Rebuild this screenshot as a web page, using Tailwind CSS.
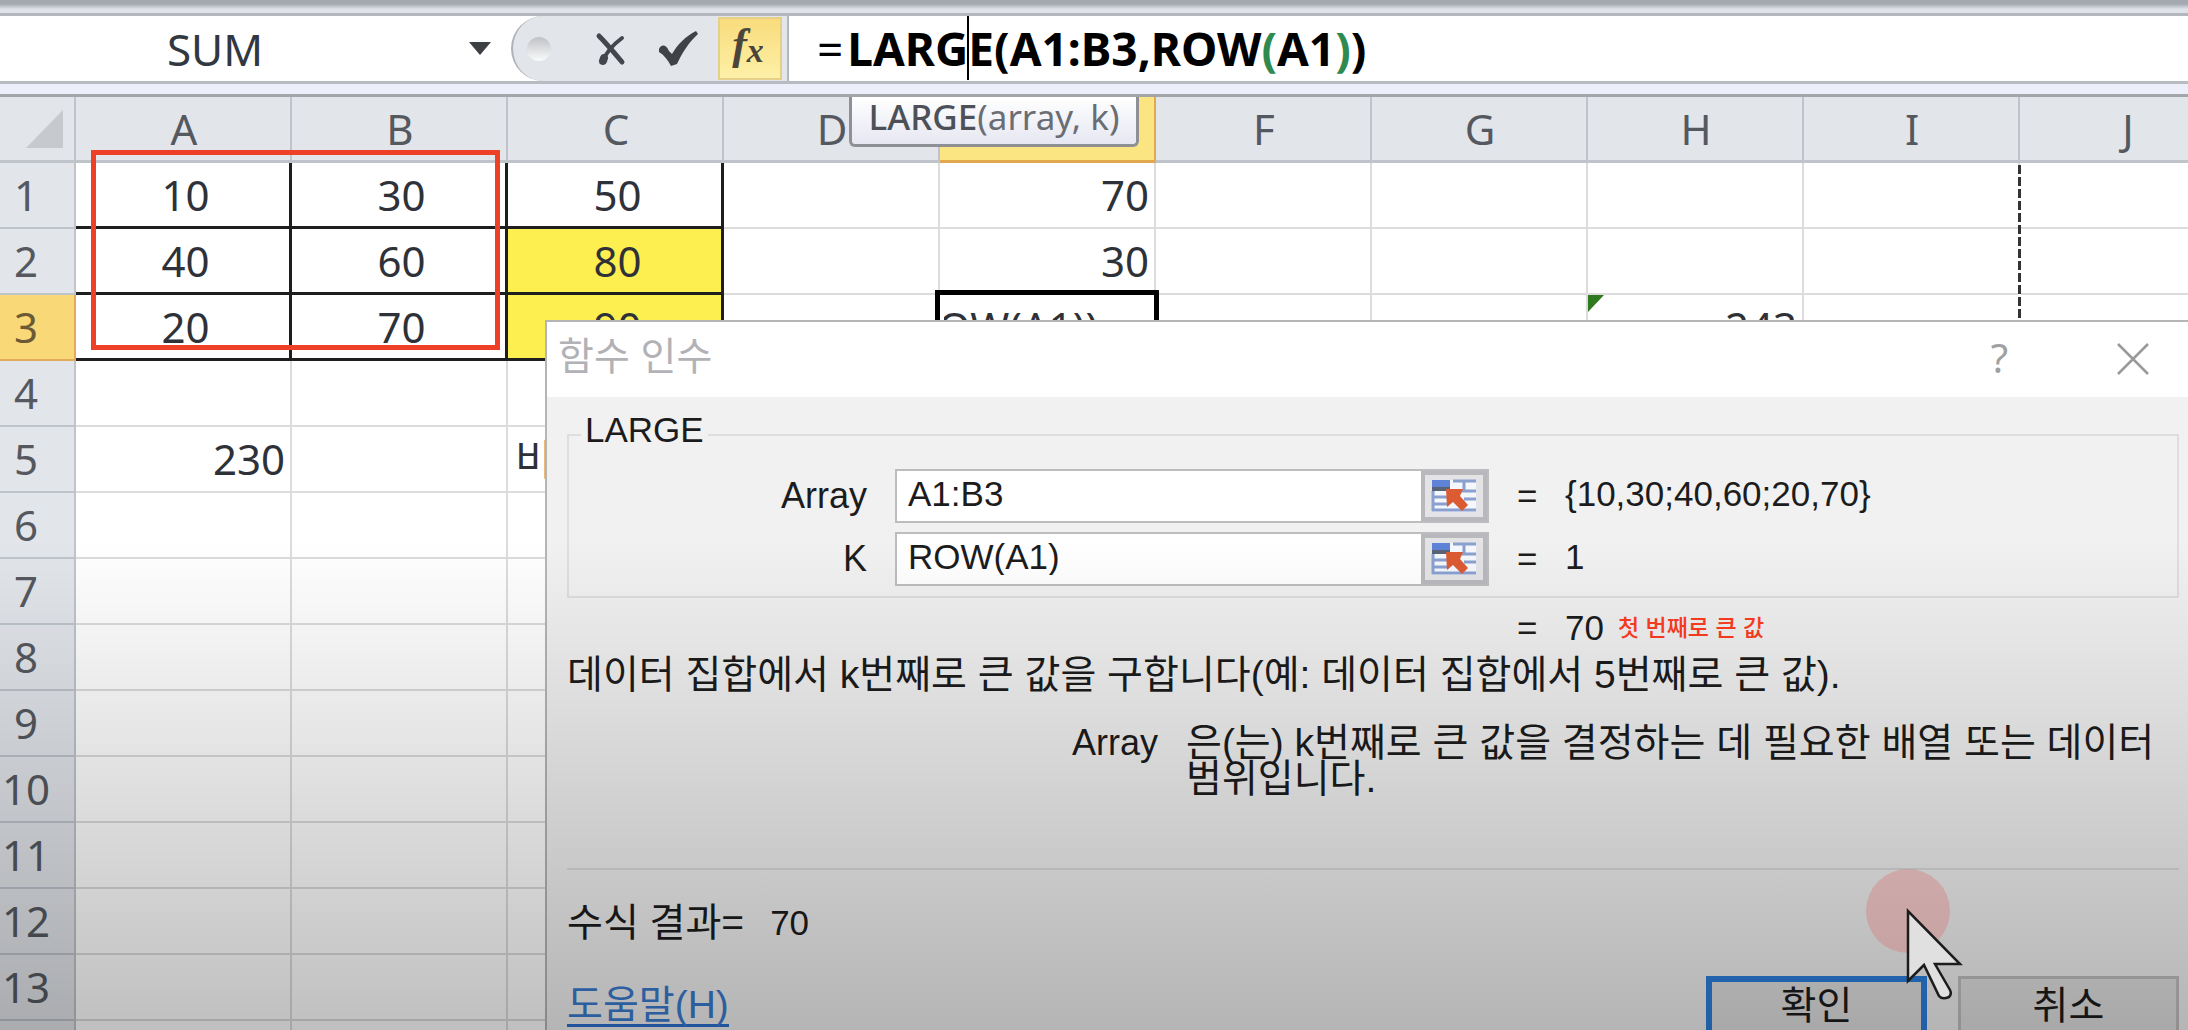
<!DOCTYPE html>
<html lang="ko">
<head>
<meta charset="utf-8">
<title>함수 인수</title>
<script src="https://cdn.jsdelivr.net/npm/@tailwindcss/browser@4"></script>
</head>
<body class="bg-white">
<div class="relative h-screen overflow-hidden bg-white font-['Noto_Sans','Noto_Sans_CJK_KR',sans-serif] text-[42px] leading-none text-[#2e3238]">

  <!-- ribbon edge -->
  <div class="h-4 border-b-[3px] border-[#b4b8be] bg-linear-to-b from-[#a4a9b1] from-30% to-[#dfe3e9] to-70%"></div>

  <!-- formula bar -->
  <div class="flex h-[65px] items-stretch bg-white">
    <div class="flex w-[511px] items-center justify-end pr-5">
      <input aria-label="이름 상자" value="SUM" class="w-[340px] bg-transparent pr-[72px] text-center text-[44px] text-[#32383f] outline-none">
      <button aria-label="이름 목록" class="ml-12 flex h-8 w-[22px] items-center"><svg width="22" height="13" viewBox="0 0 22 13"><path d="M0 0h22L11 13z" fill="#3c3f44"/></svg></button>
    </div>
    <div class="flex flex-1 items-stretch">
      <div class="flex w-[276px] items-center rounded-l-[34px] border-l-2 border-[#aeb2b8] bg-[#e2e5ea]">
        <span class="ml-[14px] size-6 rounded-full bg-linear-to-b from-[#bfc2c6] to-[#fbfbfc]"></span>
        <button aria-label="취소" class="ml-[44px]"><svg width="32" height="34" viewBox="0 0 32 34" fill="none" stroke="#43474d" stroke-linecap="round"><path d="M4 4C9 9 17 18 27 30" stroke-width="5"/><path d="M27 6C19 12 11 20 8 29" stroke-width="4"/><path d="M9 26l-1 3" stroke-width="8"/></svg></button>
        <button aria-label="입력" class="ml-[31px]"><svg width="42" height="36" viewBox="0 0 42 36"><path d="M1 18c2-5 7-5 10 2l3 3C19 14 28 5 38 0l2 3C31 11 24 22 19 33l-6 2C10 29 6 24 1 21z" fill="#3f4348"/></svg></button>
        <button aria-label="함수 삽입" class="ml-auto mr-[5px] flex h-[63px] w-[64px] items-center justify-center border-2 border-[#e6cf86] bg-linear-to-b from-[#f9dc7c] to-[#fdf0a6] pb-2 pr-1 font-['Liberation_Serif',serif] text-[44px] font-bold italic text-[#4a463c]">f<span class="mt-3 text-[34px]">x</span></button>
      </div>
      <div class="w-[2px] bg-[#b4b8be]"></div>
      <div role="textbox" contenteditable="true" aria-label="수식 입력줄" class="flex flex-1 items-center pl-7 pb-[2px] text-[46px] font-bold whitespace-nowrap text-black outline-none"><span class="pr-1 font-normal">=</span>LARG<span class="relative h-[64px] w-0"><span class="absolute -left-px top-0 h-full w-[2px] bg-black"></span></span>E(A1:B3,ROW<span class="text-[#2f8a50]">(</span>A1<span class="text-[#2f8a50]">)</span>)</div>
    </div>
  </div>
  <div class="h-4 border-t-[3px] border-b-[3px] border-t-[#b8bbc1] border-b-[#a3a5aa] bg-[#eceefa]"></div>

  <!-- worksheet -->
  <div class="relative">
    <table class="w-full table-fixed border-separate border-spacing-0">
      <colgroup><col class="w-[76px]"><col class="w-[216px]"><col class="w-[216px]"><col class="w-[216px]"><col class="w-[216px]"><col class="w-[216px]"><col class="w-[216px]"><col class="w-[216px]"><col class="w-[216px]"><col class="w-[216px]"><col class="w-[216px]"></colgroup>
      <thead><tr id="columns"></tr></thead>
      <tbody id="rows"></tbody>
    </table>

    <!-- page break -->
    <div class="absolute left-[2018px] top-[68px] h-[300px] w-[3px] bg-[repeating-linear-gradient(to_bottom,#333_0px,#333_9px,#fff_9px,#fff_12px)]"></div>

    <!-- function hint -->
    <div class="absolute left-[849px] top-0 flex h-[50px] w-[290px] items-center justify-center rounded-b-md border-[3px] border-t-0 border-[#8e9096] bg-linear-to-b from-white to-[#e6e7f2] pb-2 text-[35px] whitespace-nowrap text-[#6a6d73]"><span class="font-medium text-[#4d5157]">LARGE</span>(array, k)</div>

    <!-- highlighted range -->
    <div class="absolute left-[91px] top-[53px] h-[200px] w-[409px] border-[5px] border-[#ee4027]"></div>
  </div>

  <!-- function arguments dialog -->
  <section role="dialog" aria-label="함수 인수" class="absolute left-[545px] right-0 top-[320px] border-l-2 border-t-2 border-[#b5b5b5] bg-[#f1f1f1] font-['Liberation_Sans','Noto_Sans_CJK_KR',sans-serif] text-[39px] leading-[36px] text-[#1c1c1c]">
    <header class="flex h-[75px] items-center bg-white pl-[11px] pr-[39px] text-[#b2b2b6]">
      <h1 class="pb-[6px]">함수 인수</h1>
      <button aria-label="도움말" class="ml-auto pb-1 font-['Noto_Sans',sans-serif] text-[40px] text-[#a0a0a0]">?</button>
      <button aria-label="닫기" class="ml-[109px] pb-[2px]"><svg width="32" height="32" viewBox="0 0 32 32" stroke="#999" stroke-width="2.5"><path d="M1 1l30 30M31 1L1 31"/></svg></button>
    </header>
    <form class="pb-6 pl-5 pr-[9px] pt-[18px]" onsubmit="return false">
      <fieldset class="border-2 border-[#dedede] px-3 pb-[10px] text-[35px]">
        <legend class="px-1 pb-[10px] leading-[30px]">LARGE</legend>
        <div class="mt-[14px] grid grid-cols-[286px_594px_20px_1fr] items-center gap-x-7 gap-y-[9px]">
          <label for="array" class="text-right text-[36px]">Array</label>
          <div class="flex h-[54px] border-2 border-[#bdbdbf] bg-white">
            <input id="array" value="A1:B3" class="min-w-0 flex-1 bg-transparent pb-1 pl-[11px] outline-none">
            <button type="button" aria-label="Array 범위 선택" class="flex w-[66px] items-center justify-center border-4 border-[#b9b9bd] bg-[#e4e4e6]"><svg width="46" height="34" viewBox="0 0 46 34"><use href="#picker"/></svg></button>
          </div>
          <span>=</span><output class="pb-1">{10,30;40,60;20,70}</output>
          <label for="k" class="text-right text-[36px]">K</label>
          <div class="flex h-[54px] border-2 border-[#bdbdbf] bg-white">
            <input id="k" value="ROW(A1)" class="min-w-0 flex-1 bg-transparent pb-1 pl-[11px] outline-none">
            <button type="button" aria-label="K 범위 선택" class="flex w-[66px] items-center justify-center border-4 border-[#b9b9bd] bg-[#e4e4e6]"><svg width="46" height="34" viewBox="0 0 46 34"><use href="#picker"/></svg></button>
          </div>
          <span>=</span><output class="pb-1">1</output>
        </div>
      </fieldset>
      <div class="mt-[10px] grid h-10 grid-cols-[286px_594px_20px_1fr] items-center gap-x-7 pl-[14px] text-[35px]">
        <span class="col-start-3">=</span>
        <div class="flex items-center gap-[14px]"><output>70</output><span class="pb-1 font-['Noto_Sans_CJK_KR',sans-serif] text-[23px] font-medium text-[#ff3c20]">첫 번째로 큰 값</span></div>
      </div>
      <p class="mt-[9px] whitespace-nowrap">데이터 집합에서 k번째로 큰 값을 구합니다(예: 데이터 집합에서 5번째로 큰 값).</p>
      <div class="mt-8 grid grid-cols-[591px_1fr] gap-x-7">
        <span class="text-right text-[36px]">Array</span>
        <p>은(는) k번째로 큰 값을 결정하는 데 필요한 배열 또는 데이터 범위입니다.</p>
      </div>
      <hr class="mt-[71px] border-t-2 border-[#dcdcdc]">
      <p class="mt-[35px] flex gap-[26px]"><span>수식 결과=</span><output class="text-[35px]">70</output></p>
      <div class="mt-[35px] flex items-center gap-[31px]">
        <a href="#" class="mr-auto border-b-[3px] border-[#2a70cf] leading-[38px] text-[#3a7bd0]">도움말(H)</a>
        <button type="submit" class="h-[60px] w-[221px] border-[6px] border-[#2b7fdd] bg-[#e1e1e1]">확인</button>
        <button type="button" class="h-[60px] w-[221px] border-[3px] border-[#c0c0c0] bg-[#e1e1e1]">취소</button>
      </div>
    </form>
  </section>

  <!-- video shade -->
  <div class="pointer-events-none absolute inset-x-0 bottom-0 h-[490px] bg-linear-to-b from-black/0 to-black/25"></div>

  <!-- pointer -->
  <svg class="pointer-events-none absolute left-[1864px] top-[868px]" width="110" height="140" viewBox="0 0 110 140">
    <circle cx="44" cy="43" r="42" fill="#d87a7a" fill-opacity=".4"/>
    <path d="M44 43V113L60 97L75 128Q78 132 85 129Q88 126 86 122L71 96H96Z" fill="#e0e0e0" stroke="#1c1c1c" stroke-width="2.5"/>
  </svg>
</div>

<svg class="hidden">
  <symbol id="picker" viewBox="0 0 46 34">
    <path d="M1 1h44v32H1z" fill="#f4f7fc"/>
    <path d="M1 1h18v7H1z" fill="#5d82d6"/>
    <path d="M1 8h18v4H1z" fill="#5a6276"/>
    <path d="M2 12v20M1 18h17M1 25h17M1 31h44M22 2h23M22 12h23M33 20h12M33 2v10" stroke="#8aa0cf" stroke-width="3" fill="none"/>
    <path d="M15 10h17l-3 7 8 9-6 6-9-9-6 5z" fill="#db5b33"/>
  </symbol>
</svg>

<script>
  const letters = ['A', 'B', 'C', 'D', 'E', 'F', 'G', 'H', 'I', 'J'];
  const head = document.getElementById('columns');
  head.innerHTML = '<th class="h-[66px] border-r-2 border-b-[3px] border-[#bfc4cb] bg-[#e2e5ea] p-0"><svg class="ml-[26px]" width="37" height="38" viewBox="0 0 37 38"><path d="M37 0v38H0z" fill="#c6c9ce"/></svg></th>' +
    letters.map(l => l === 'E'
      ? '<th aria-label="E" class="h-[66px] border-r-2 border-b-[3px] border-[#e2a850] bg-[#fbe583] p-0"></th>'
      : `<th class="h-[66px] border-r-2 border-b-[3px] border-[#bfc4cb] bg-[#e2e5ea] p-0 pl-[2px] font-normal text-[#55595f]">${l}</th>`).join('');

  const data = {
    A1: '10', B1: '30', C1: '50', A2: '40', B2: '60', C2: '80', A3: '20', B3: '70', C3: '90',
    E1: '70', E2: '30', H3: '243', A5: '230', C5: '비교'
  };
  const boxed = 'h-[66px] border-r-[3px] border-b-[3px] border-[#1e1e1e] p-0 pl-[6px] text-center';
  const plain = 'h-[66px] border-r-2 border-b-2 border-[#dcdcdc] p-0 pr-[5px] text-right';
  let html = '';
  for (let r = 1; r <= 14; r++) {
    html += r === 3
      ? '<tr><th class="h-[66px] border-r-2 border-b-2 border-[#e0ab5c] bg-[#f9d977] p-0 pr-[22px] font-normal text-[#6b5a35]">3</th>'
      : `<tr><th class="h-[66px] border-r-2 border-b-2 border-[#bfc4cb] bg-[#e2e5ea] p-0 pr-[22px] font-normal text-[#55595f]">${r < 14 ? r : ''}</th>`;
    for (const c of letters) {
      const id = c + r, v = data[id] || '';
      if (id === 'C2' || id === 'C3') html += `<td class="${boxed} bg-[#fdef4f]">${v}</td>`;
      else if (r <= 3 && 'ABC'.includes(c)) html += `<td class="${boxed}">${v}</td>`;
      else if (id === 'E3') html += `<td class="relative ${plain}"><div class="absolute -left-[5px] -top-[5px] flex h-[74px] w-[224px] items-center border-[5px] border-black bg-white pl-1"><div class="flex w-[154px] justify-end overflow-hidden leading-[64px]"><span>=LARGE(A1:B3,ROW(A1))</span></div></div></td>`;
      else if (id === 'H3') html += `<td class="relative ${plain}"><svg class="absolute left-0 top-0" width="16" height="17" viewBox="0 0 16 17"><path d="M0 0h16L0 17z" fill="#2f7a1f"/></svg>${v}</td>`;
      else if (id === 'C5') html += '<td class="h-[66px] overflow-hidden border-r-2 border-b-2 border-[#dcdcdc] p-0 pl-[7px] text-left">비교</td>';
      else html += `<td class="${plain}">${v}</td>`;
    }
    html += '</tr>';
  }
  document.getElementById('rows').innerHTML = html;
</script>
</body>
</html>
